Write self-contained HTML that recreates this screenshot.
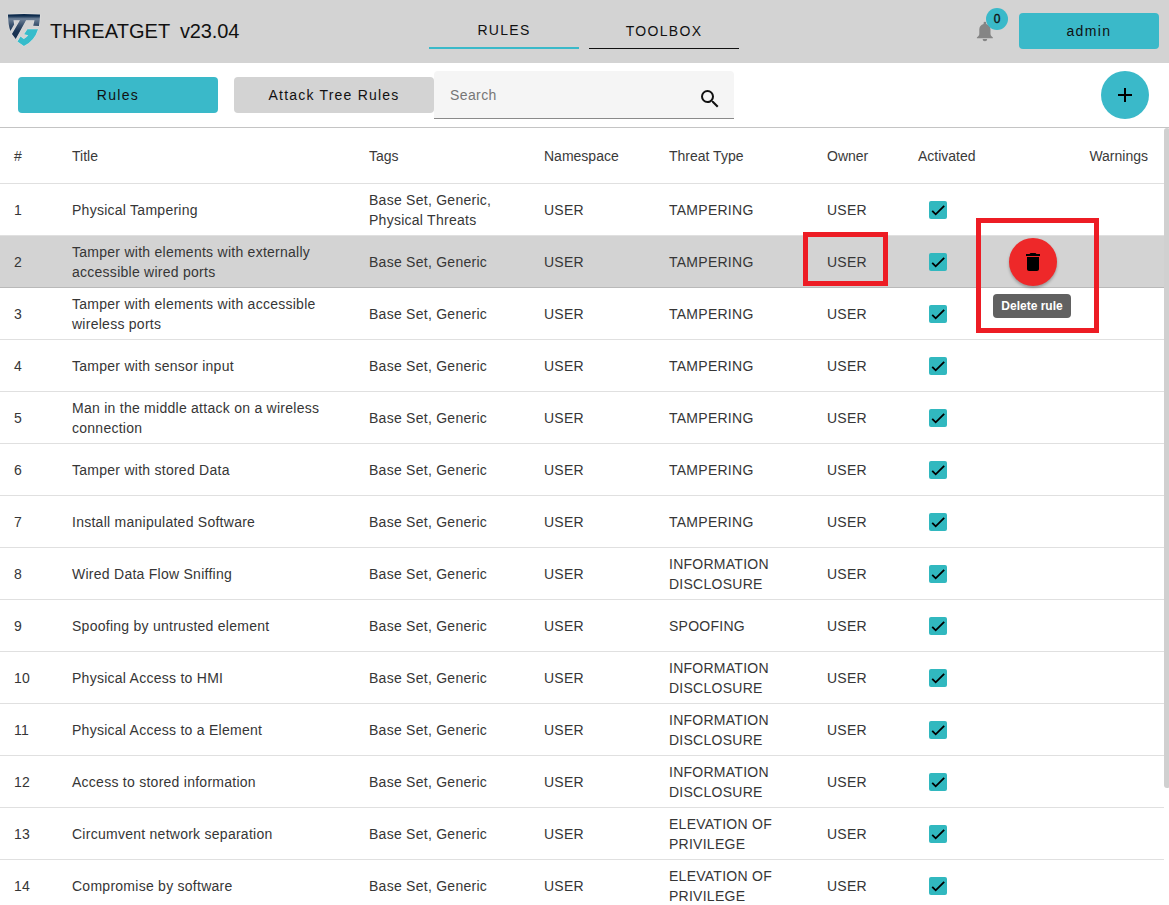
<!DOCTYPE html>
<html lang="en"><head><meta charset="utf-8"><title>THREATGET Rules</title>
<style>
html,body{margin:0;padding:0;}
body{width:1169px;height:905px;overflow:hidden;background:#fff;font-family:"Liberation Sans",sans-serif;color:#212121;position:relative;}
.bar{position:absolute;left:0;top:0;width:1169px;height:63px;background:#d3d3d3;}
.logo{position:absolute;left:4px;top:10px;}
.brand{position:absolute;left:50px;top:18px;font-size:20px;line-height:26px;color:#111;white-space:nowrap;}
.brand .n{letter-spacing:0.07px;}.brand .v{margin-left:9.7px;letter-spacing:-.15px;}
.tab{position:absolute;top:18px;width:150px;height:31px;text-align:center;font-size:14px;letter-spacing:1.3px;line-height:24px;color:#111;box-sizing:border-box;}
.tab.t1{left:429px;border-bottom:2px solid #3ab9c9;}
.tab.t2{left:589px;border-bottom:1.5px solid #111;top:19px;height:30px;}
.admin{position:absolute;left:1019px;top:13px;width:140px;height:36px;border-radius:4px;background:#3ab9c9;text-align:center;font-size:14px;letter-spacing:1.4px;line-height:36px;color:#111;}
.bell{position:absolute;left:965px;top:0;}
.badge{position:absolute;left:986px;top:8px;width:22px;height:22px;border-radius:50%;background:#3ab9c9;text-align:center;font-size:12px;line-height:22px;color:#111;-webkit-text-stroke:0.35px #111;}
.btn{position:absolute;top:77px;width:200px;height:36px;border-radius:4px;text-align:center;font-size:14px;letter-spacing:1.3px;line-height:36px;color:#111;}
.btn.b1{left:18px;background:#3ab9c9;}
.btn.b2{left:234px;background:#d3d3d3;letter-spacing:1.2px;}
.search{position:absolute;left:434px;top:71px;width:300px;height:48px;box-sizing:border-box;background:#f5f5f5;border-radius:4px 4px 0 0;border-bottom:1px solid #8a8a8a;}
.search .ph{position:absolute;left:16px;top:14px;font-size:14px;line-height:20px;color:#777;letter-spacing:.4px;}
.search svg{position:absolute;left:264px;top:16px;}
.fab{position:absolute;left:1101px;top:71px;width:48px;height:48px;border-radius:50%;background:#3ab9c9;}
.fab svg{position:absolute;left:12px;top:12px;}
.sep{position:absolute;left:0;top:127px;width:1169px;height:1px;background:#c4c4c4;}
.tbl{position:absolute;left:0;top:128px;width:1164px;height:777px;overflow:hidden;font-size:14px;}
.hrow{position:absolute;left:0;top:0;width:1164px;height:56px;box-sizing:border-box;border-bottom:1px solid rgba(0,0,0,.12);line-height:56px;color:#3a3a3a;}
.hrow .c{position:absolute;top:0;white-space:nowrap;}
.row{position:absolute;left:0;width:1164px;height:52px;box-sizing:border-box;border-bottom:1px solid rgba(0,0,0,.12);letter-spacing:.26px;color:#363636;}
.row.sel{background:#d3d3d3;}
.row .c{position:absolute;top:0;height:51px;display:flex;align-items:center;line-height:20px;white-space:nowrap;}
.c0{left:14px}.c1{left:72px}.c2{left:369px}.c3{left:544px}.c4{left:669px}.c5{left:827px}.c6{left:918px}
.hrow .c7{left:auto;right:16px;}
.cb{position:absolute;left:929px;top:17px;width:18px;height:18px;}
.cb svg{display:block}
.scroll{position:absolute;left:1164px;top:128px;width:6px;height:660px;background:#d0d0d0;border-radius:3px;}
.rb{position:absolute;box-sizing:border-box;border:5px solid #ed1c24;}
.del{position:absolute;left:1009px;top:238px;width:48px;height:48px;border-radius:50%;background:#ee2829;box-shadow:0 2px 3px rgba(0,0,0,.28);}
.del svg{position:absolute;left:12px;top:12px;}
.tip{position:absolute;left:993px;top:294px;width:78px;height:24px;border-radius:4px;background:#616161;color:#fff;font-size:12px;font-weight:bold;line-height:24px;text-align:center;white-space:nowrap;}

</style></head>
<body>
<div class="bar">
<svg class="logo" width="40" height="40" viewBox="0 0 905 905"><defs><linearGradient id="lg" x1="0" y1="0" x2="0" y2="1"><stop offset="0" stop-color="#0d2a4b"/><stop offset="0.08" stop-color="#0f2d4f"/><stop offset="0.2" stop-color="#6f8298"/><stop offset="0.45" stop-color="#3a516d"/><stop offset="0.7" stop-color="#1a3353"/><stop offset="1" stop-color="#162f4e"/></linearGradient></defs>
<g stroke="#e6e6e6" stroke-width="18" stroke-linejoin="round"><path d="M90 102 Q452 74 815 102 Q815 240 790 360 L660 355 L690 230 L500 230 L265 655 L180 545 L360 230 L215 230 L230 330 L145 475 Q90 330 90 102 Z" fill="#e6e6e6"/><path d="M530 435 L770 435 Q690 700 450 815 L305 710 L375 600 Q420 640 450 655 Q510 630 548 574 L455 550 Z" fill="#e6e6e6"/></g>
<path d="M90 102 Q452 74 815 102 Q815 240 790 360 L660 355 L690 230 L500 230 L265 655 L180 545 L360 230 L215 230 L230 330 L145 475 Q90 330 90 102 Z" fill="url(#lg)"/>
<path d="M530 435 L770 435 Q690 700 450 815 L305 710 L375 600 Q420 640 450 655 Q510 630 548 574 L455 550 Z" fill="#36bccb"/></svg>
<div class="brand"><span class="n">THREATGET</span><span class="v">v23.04</span></div>
<div class="tab t1">RULES</div>
<div class="tab t2">TOOLBOX</div>
<svg class="bell" width="50" height="50" viewBox="0 0 50 50"><path d="M18.600 24.100 V23.100 a1.300 1.300 0 0 1 2.600 0 V24.100 C23.800 24.600 25.500 26.800 25.500 29.600 V33.800 C25.500 35.300 26.300 36.300 27.900 37.600 V38.200 H11.900 V37.600 C13.500 36.300 14.300 35.300 14.300 33.800 V29.600 C14.300 26.800 16 24.600 18.600 24.100 Z M17.600 39.100 H22.200 A2.300 2.200 0 0 1 17.600 39.100 Z" fill="#858585"/></svg>
<div class="badge">0</div>
<div class="admin">admin</div>
</div>
<div class="btn b1">Rules</div>
<div class="btn b2">Attack Tree Rules</div>
<div class="search"><span class="ph">Search</span><svg width="24" height="24" viewBox="0 0 24 24"><path d="M15.500 14h-.79l-.28-.27A6.471 6.471 0 0 0 16 9.500 6.500 6.500 0 1 0 9.500 16c1.610 0 3.090-.59 4.230-1.570l.27.28v.79l5 4.990L20.490 19l-4.990-5zm-6 0C7.010 14 5 11.990 5 9.500S7.010 5 9.500 5 14 7.010 14 9.500 11.990 14 9.500 14z" fill="#111"/></svg></div>
<div class="fab"><svg width="24" height="24" viewBox="0 0 24 24"><path d="M19 13h-6v6h-2v-6H5v-2h6V5h2v6h6v2z" fill="#000"/></svg></div>
<div class="sep"></div>
<div class="tbl">
<div class="hrow"><span class="c c0">#</span><span class="c c1">Title</span><span class="c c2">Tags</span><span class="c c3">Namespace</span><span class="c c4">Threat Type</span><span class="c c5">Owner</span><span class="c c6">Activated</span><span class="c c7">Warnings</span></div>
<div class="row" style="top:56px"><span class="c c0"><span>1</span></span><span class="c c1"><span>Physical Tampering</span></span><span class="c c2"><span>Base Set, Generic,<br>Physical Threats</span></span><span class="c c3"><span>USER</span></span><span class="c c4"><span>TAMPERING</span></span><span class="c c5"><span>USER</span></span><span class="cb"><svg viewBox="0 0 18 18" width="18" height="18"><rect width="18" height="18" rx="2" fill="#31b8bf"/><path d="M3.200 9.800 L6.700 13.300 L15.200 4.800" fill="none" stroke="#000" stroke-width="1.85"/></svg></span></div>
<div class="row sel" style="top:108px"><span class="c c0"><span>2</span></span><span class="c c1"><span>Tamper with elements with externally<br>accessible wired ports</span></span><span class="c c2"><span>Base Set, Generic</span></span><span class="c c3"><span>USER</span></span><span class="c c4"><span>TAMPERING</span></span><span class="c c5"><span>USER</span></span><span class="cb"><svg viewBox="0 0 18 18" width="18" height="18"><rect width="18" height="18" rx="2" fill="#31b8bf"/><path d="M3.200 9.800 L6.700 13.300 L15.200 4.800" fill="none" stroke="#000" stroke-width="1.85"/></svg></span></div>
<div class="row" style="top:160px"><span class="c c0"><span>3</span></span><span class="c c1"><span>Tamper with elements with accessible<br>wireless ports</span></span><span class="c c2"><span>Base Set, Generic</span></span><span class="c c3"><span>USER</span></span><span class="c c4"><span>TAMPERING</span></span><span class="c c5"><span>USER</span></span><span class="cb"><svg viewBox="0 0 18 18" width="18" height="18"><rect width="18" height="18" rx="2" fill="#31b8bf"/><path d="M3.200 9.800 L6.700 13.300 L15.200 4.800" fill="none" stroke="#000" stroke-width="1.85"/></svg></span></div>
<div class="row" style="top:212px"><span class="c c0"><span>4</span></span><span class="c c1"><span>Tamper with sensor input</span></span><span class="c c2"><span>Base Set, Generic</span></span><span class="c c3"><span>USER</span></span><span class="c c4"><span>TAMPERING</span></span><span class="c c5"><span>USER</span></span><span class="cb"><svg viewBox="0 0 18 18" width="18" height="18"><rect width="18" height="18" rx="2" fill="#31b8bf"/><path d="M3.200 9.800 L6.700 13.300 L15.200 4.800" fill="none" stroke="#000" stroke-width="1.85"/></svg></span></div>
<div class="row" style="top:264px"><span class="c c0"><span>5</span></span><span class="c c1"><span>Man in the middle attack on a wireless<br>connection</span></span><span class="c c2"><span>Base Set, Generic</span></span><span class="c c3"><span>USER</span></span><span class="c c4"><span>TAMPERING</span></span><span class="c c5"><span>USER</span></span><span class="cb"><svg viewBox="0 0 18 18" width="18" height="18"><rect width="18" height="18" rx="2" fill="#31b8bf"/><path d="M3.200 9.800 L6.700 13.300 L15.200 4.800" fill="none" stroke="#000" stroke-width="1.85"/></svg></span></div>
<div class="row" style="top:316px"><span class="c c0"><span>6</span></span><span class="c c1"><span>Tamper with stored Data</span></span><span class="c c2"><span>Base Set, Generic</span></span><span class="c c3"><span>USER</span></span><span class="c c4"><span>TAMPERING</span></span><span class="c c5"><span>USER</span></span><span class="cb"><svg viewBox="0 0 18 18" width="18" height="18"><rect width="18" height="18" rx="2" fill="#31b8bf"/><path d="M3.200 9.800 L6.700 13.300 L15.200 4.800" fill="none" stroke="#000" stroke-width="1.85"/></svg></span></div>
<div class="row" style="top:368px"><span class="c c0"><span>7</span></span><span class="c c1"><span>Install manipulated Software</span></span><span class="c c2"><span>Base Set, Generic</span></span><span class="c c3"><span>USER</span></span><span class="c c4"><span>TAMPERING</span></span><span class="c c5"><span>USER</span></span><span class="cb"><svg viewBox="0 0 18 18" width="18" height="18"><rect width="18" height="18" rx="2" fill="#31b8bf"/><path d="M3.200 9.800 L6.700 13.300 L15.200 4.800" fill="none" stroke="#000" stroke-width="1.85"/></svg></span></div>
<div class="row" style="top:420px"><span class="c c0"><span>8</span></span><span class="c c1"><span>Wired Data Flow Sniffing</span></span><span class="c c2"><span>Base Set, Generic</span></span><span class="c c3"><span>USER</span></span><span class="c c4"><span>INFORMATION<br>DISCLOSURE</span></span><span class="c c5"><span>USER</span></span><span class="cb"><svg viewBox="0 0 18 18" width="18" height="18"><rect width="18" height="18" rx="2" fill="#31b8bf"/><path d="M3.200 9.800 L6.700 13.300 L15.200 4.800" fill="none" stroke="#000" stroke-width="1.85"/></svg></span></div>
<div class="row" style="top:472px"><span class="c c0"><span>9</span></span><span class="c c1"><span>Spoofing by untrusted element</span></span><span class="c c2"><span>Base Set, Generic</span></span><span class="c c3"><span>USER</span></span><span class="c c4"><span>SPOOFING</span></span><span class="c c5"><span>USER</span></span><span class="cb"><svg viewBox="0 0 18 18" width="18" height="18"><rect width="18" height="18" rx="2" fill="#31b8bf"/><path d="M3.200 9.800 L6.700 13.300 L15.200 4.800" fill="none" stroke="#000" stroke-width="1.85"/></svg></span></div>
<div class="row" style="top:524px"><span class="c c0"><span>10</span></span><span class="c c1"><span>Physical Access to HMI</span></span><span class="c c2"><span>Base Set, Generic</span></span><span class="c c3"><span>USER</span></span><span class="c c4"><span>INFORMATION<br>DISCLOSURE</span></span><span class="c c5"><span>USER</span></span><span class="cb"><svg viewBox="0 0 18 18" width="18" height="18"><rect width="18" height="18" rx="2" fill="#31b8bf"/><path d="M3.200 9.800 L6.700 13.300 L15.200 4.800" fill="none" stroke="#000" stroke-width="1.85"/></svg></span></div>
<div class="row" style="top:576px"><span class="c c0"><span>11</span></span><span class="c c1"><span>Physical Access to a Element</span></span><span class="c c2"><span>Base Set, Generic</span></span><span class="c c3"><span>USER</span></span><span class="c c4"><span>INFORMATION<br>DISCLOSURE</span></span><span class="c c5"><span>USER</span></span><span class="cb"><svg viewBox="0 0 18 18" width="18" height="18"><rect width="18" height="18" rx="2" fill="#31b8bf"/><path d="M3.200 9.800 L6.700 13.300 L15.200 4.800" fill="none" stroke="#000" stroke-width="1.85"/></svg></span></div>
<div class="row" style="top:628px"><span class="c c0"><span>12</span></span><span class="c c1"><span>Access to stored information</span></span><span class="c c2"><span>Base Set, Generic</span></span><span class="c c3"><span>USER</span></span><span class="c c4"><span>INFORMATION<br>DISCLOSURE</span></span><span class="c c5"><span>USER</span></span><span class="cb"><svg viewBox="0 0 18 18" width="18" height="18"><rect width="18" height="18" rx="2" fill="#31b8bf"/><path d="M3.200 9.800 L6.700 13.300 L15.200 4.800" fill="none" stroke="#000" stroke-width="1.85"/></svg></span></div>
<div class="row" style="top:680px"><span class="c c0"><span>13</span></span><span class="c c1"><span>Circumvent network separation</span></span><span class="c c2"><span>Base Set, Generic</span></span><span class="c c3"><span>USER</span></span><span class="c c4"><span>ELEVATION OF<br>PRIVILEGE</span></span><span class="c c5"><span>USER</span></span><span class="cb"><svg viewBox="0 0 18 18" width="18" height="18"><rect width="18" height="18" rx="2" fill="#31b8bf"/><path d="M3.200 9.800 L6.700 13.300 L15.200 4.800" fill="none" stroke="#000" stroke-width="1.85"/></svg></span></div>
<div class="row" style="top:732px"><span class="c c0"><span>14</span></span><span class="c c1"><span>Compromise by software</span></span><span class="c c2"><span>Base Set, Generic</span></span><span class="c c3"><span>USER</span></span><span class="c c4"><span>ELEVATION OF<br>PRIVILEGE</span></span><span class="c c5"><span>USER</span></span><span class="cb"><svg viewBox="0 0 18 18" width="18" height="18"><rect width="18" height="18" rx="2" fill="#31b8bf"/><path d="M3.200 9.800 L6.700 13.300 L15.200 4.800" fill="none" stroke="#000" stroke-width="1.85"/></svg></span></div>
</div>
<div class="scroll"></div>
<div class="del"><svg width="24" height="24" viewBox="0 0 24 24"><path d="M6 19c0 1.100.900 2 2 2h8c1.100 0 2-.9 2-2V7H6v12zM19 4h-3.500l-1-1h-5l-1 1H5v2h14V4z" fill="#000"/></svg></div>
<div class="tip">Delete rule</div>
<div class="rb" style="left:803px;top:232px;width:85px;height:54px;"></div>
<div class="rb" style="left:976px;top:218px;width:123px;height:115px;"></div>
</body></html>
